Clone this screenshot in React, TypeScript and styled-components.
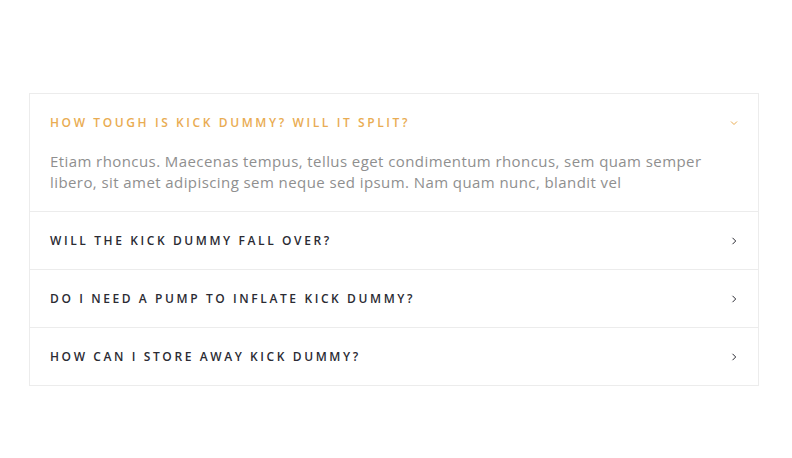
import React, { useState } from "react";
import styled, { createGlobalStyle } from "styled-components";

const Global = createGlobalStyle`
  html, body { margin: 0; padding: 0; background: #fff; }
  body { font-family: "Open Sans", "Lato", sans-serif; }
`;

const Page = styled.div`
  padding: 93px 33px 0 29px;
`;

const Accordion = styled.div`
  border: 1px solid #ececec;
  border-bottom: none;
`;

const Item = styled.div`
  border-bottom: 1px solid #ececec;
`;

const Header = styled.button<{ $open: boolean }>`
  display: flex;
  align-items: center;
  justify-content: space-between;
  width: 100%;
  height: 57px;
  padding: 0 20px;
  border: none;
  background: none;
  cursor: pointer;
  font-family: "Open Sans", "Lato", sans-serif;
  font-size: 12px;
  font-weight: 600;
  letter-spacing: 2.6px;
  text-transform: uppercase;
  color: ${(p) => (p.$open ? "#e9ac52" : "#2b2b33")};
  text-align: left;
`;

const Icon = styled.svg`
  width: 8px;
  height: 8px;
  flex: none;
`;

const Body = styled.div`
  padding: 0 50px 18px 20px;
  font-size: 15px;
  line-height: 21px;
  letter-spacing: 0.42px;
  color: #8f8f8f;
  font-weight: 400;
`;

const items = [
  {
    q: "How tough is Kick Dummy? Will it split?",
    a: "Etiam rhoncus. Maecenas tempus, tellus eget condimentum rhoncus, sem quam semper libero, sit amet adipiscing sem neque sed ipsum. Nam quam nunc, blandit vel",
  },
  { q: "Will the Kick Dummy fall over?", a: "" },
  { q: "Do I need a pump to inflate Kick Dummy?", a: "" },
  { q: "How can I store away Kick Dummy?", a: "" },
];

export default function App() {
  const [open, setOpen] = useState(0);
  return (
    <>
      <Global />
      <Page>
        <Accordion>
          {items.map((it, i) => {
            const isOpen = open === i;
            return (
              <Item key={i}>
                <Header $open={isOpen} onClick={() => setOpen(isOpen ? -1 : i)}>
                  <span>{it.q}</span>
                  <Icon viewBox="0 0 8 8">
                    {isOpen ? (
                      <path d="M1 2.5 L4 5.5 L7 2.5" fill="none" stroke="#e9ac52" strokeWidth="1" />
                    ) : (
                      <path d="M2.5 0.8 L5.7 4 L2.5 7.2" fill="none" stroke="#2b2b33" strokeWidth="1" />
                    )}
                  </Icon>
                </Header>
                {isOpen && <Body>{it.a}</Body>}
              </Item>
            );
          })}
        </Accordion>
      </Page>
    </>
  );
}
